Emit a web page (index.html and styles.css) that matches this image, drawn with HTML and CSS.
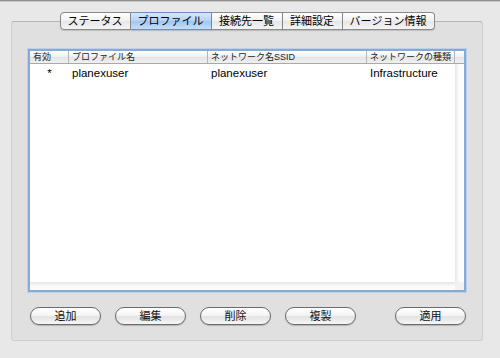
FILE: index.html
```html
<!DOCTYPE html>
<html>
<head>
    <meta charset="utf-8">
    <title>プロファイル</title>
    <link rel="stylesheet" href="styles.css">
</head>
<body>
    <div class="window">
        <div class="tabs">
            <div class="tab t-status">ステータス</div>
            <div class="tab t-profile selected">プロファイル</div>
            <div class="tab t-list">接続先一覧</div>
            <div class="tab t-detail">詳細設定</div>
            <div class="tab t-version">バージョン情報</div>
        </div>

        <div class="panel">
            <div class="table">
                <div class="thead">
                    <div class="th">有効</div>
                    <div class="th">プロファイル名</div>
                    <div class="th">ネットワーク名SSID</div>
                    <div class="th">ネットワークの種類</div>
                    <div class="th"></div>
                </div>
                <div class="tbody">
                    <div class="rows">
                        <div class="row">
                            <div class="td active">*</div>
                            <div class="td">planexuser</div>
                            <div class="td">planexuser</div>
                            <div class="td">Infrastructure</div>
                        </div>
                    </div>
                    <div class="vscroll"></div>
                </div>
                <div class="hscroll">
                    <div class="track"></div>
                    <div class="corner"></div>
                </div>
            </div>

            <div class="buttons">
                <button class="btn">追加</button>
                <button class="btn">編集</button>
                <button class="btn">削除</button>
                <button class="btn">複製</button>
                <button class="btn apply">適用</button>
            </div>
        </div>
    </div>
</body>
</html>
```

FILE: styles.css
```css
body {
    margin: 0;
    background: #e8e8e8;
    font-family: "Liberation Sans", "Noto Sans CJK JP", sans-serif;
    color: #000;
}
.window {
    border-top: 1px solid #8f8f8f;
    box-shadow: inset 0 1px 0 #c9c9c9;
    padding-top: 11px;
    height: 346px;
}
.tabs {
    display: flex;
    justify-content: center;
    margin: 0 17px 0 11px;
    position: relative;
    z-index: 1;
}
.tab {
    height: 16px;
    line-height: 16px;
    font-size: 11px;
    text-align: center;
    border: 1px solid #8a8a8a;
    border-left: none;
    background: linear-gradient(#ffffff, #f1f1f1 50%, #e6e6e6 51%, #f4f4f4);
    box-shadow: 0 1px 1px rgba(0, 0, 0, 0.15);
}
.tab:first-child {
    border-left: 1px solid #8a8a8a;
    border-radius: 4px 0 0 4px;
}
.tab:last-child {
    border-radius: 0 4px 4px 0;
}
.tab.selected {
    background: linear-gradient(#d6e8fb, #b3d3f6 50%, #9fc6f1 51%, #c4def9);
    border-color: #6f8fb8;
}
.t-status { width: 69px; }
.t-profile { width: 80px; }
.t-list { width: 70px; }
.t-detail { width: 59px; }
.t-version { width: 91px; }

.panel {
    margin: -9px 17px 0 11px;
    height: 320px;
    box-sizing: border-box;
    border: 1px solid #cdcdcd;
    border-top-color: #b4b4b4;
    border-radius: 3px;
    background: #e0e0e0;
    padding: 27px 16px 0 16px;
}
.table {
    height: 243px;
    box-sizing: border-box;
    border: 2px solid #86a9d8;
    box-shadow: 0 0 0 1px #bcd0ea;
    background: #fff;
    display: flex;
    flex-direction: column;
}
.thead,
.row {
    display: grid;
    grid-template-columns: 39px 139px 159px 88px 9px;
}
.thead {
    height: 12px;
    border-bottom: 1px solid #a9a9a9;
    background: linear-gradient(#ffffff, #efefef 50%, #e4e4e4 51%, #f0f0f0);
}
.th {
    font-size: 9px;
    line-height: 12px;
    padding-left: 3px;
    border-right: 1px solid #b5b5b5;
    white-space: nowrap;
    overflow: hidden;
    color: #222;
}
.th:last-child {
    border-right: none;
}
.tbody {
    flex: 1;
    display: flex;
}
.rows {
    flex: 1;
}
.row {
    grid-template-columns: 39px 139px 159px 88px;
    height: 18px;
}
.td {
    font-size: 11.5px;
    line-height: 18px;
    padding-left: 3px;
    white-space: nowrap;
}
.td.active {
    padding-left: 0;
    text-align: center;
}
.vscroll {
    width: 9px;
    background: linear-gradient(to right, #e6e6e6, #fbfbfb 40%, #ffffff);
}
.hscroll {
    height: 8px;
    display: flex;
}
.track {
    flex: 1;
    background: linear-gradient(#e4e4e4, #f7f7f7 40%, #ffffff);
}
.corner {
    width: 9px;
    background: #f2f2f2;
}

.buttons {
    display: flex;
    gap: 14px;
    margin-top: 15px;
    padding-left: 2px;
}
.btn {
    width: 71px;
    height: 18px;
    padding: 0;
    font-family: inherit;
    font-size: 11px;
    line-height: 16px;
    color: #111;
    border: 1px solid #6b6b6b;
    border-radius: 9px;
    background: linear-gradient(#ffffff, #f5f5f5 45%, #e2e2e2 55%, #f7f7f7);
    box-shadow: 0 1px 1px rgba(0, 0, 0, 0.2);
}
.btn.apply {
    margin-left: auto;
}
```
